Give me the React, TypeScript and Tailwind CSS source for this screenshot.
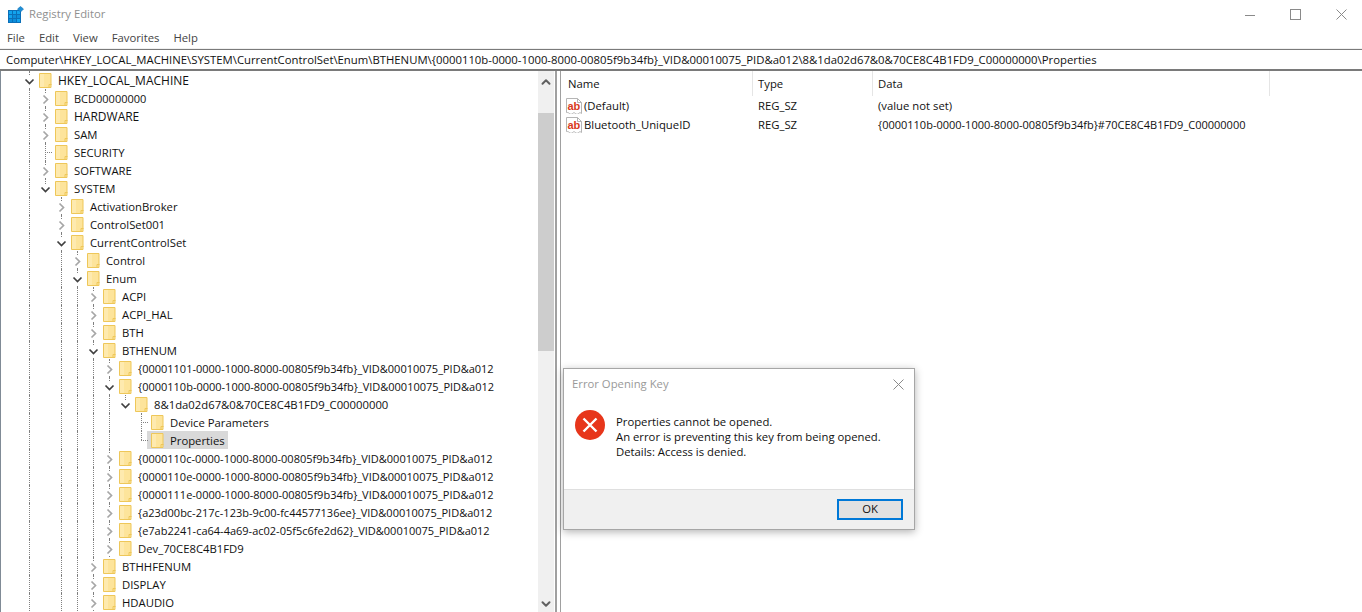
import { ChevronDown, ChevronUp } from 'lucide-react';

const font = { fontFamily: '"Open Sans", "Noto Sans", sans-serif' };

type Row = {
  level: number;
  kind: 'open' | 'closed' | 'leaf';
  label: string;
  guides: number[];
  last?: boolean;
  selected?: boolean;
  size?: string;
};

const l1 = [0];
const l3 = [0, 2];
const l4 = [0, 2, 3];
const l5 = [0, 2, 3, 4];
const l6 = [0, 2, 3, 4, 5];
const hex = 'text-[11px]';

const rows: Row[] = [
  { level: 0, kind: 'open', label: 'HKEY_LOCAL_MACHINE', guides: [], size: 'text-[12px]' },
  { level: 1, kind: 'closed', label: 'BCD00000000', guides: l1, size: hex },
  { level: 1, kind: 'closed', label: 'HARDWARE', guides: l1, size: 'text-[12px]' },
  { level: 1, kind: 'closed', label: 'SAM', guides: l1 },
  { level: 1, kind: 'leaf', label: 'SECURITY', guides: l1 },
  { level: 1, kind: 'closed', label: 'SOFTWARE', guides: l1 },
  { level: 1, kind: 'open', label: 'SYSTEM', guides: l1, last: true },
  { level: 2, kind: 'closed', label: 'ActivationBroker', guides: l1 },
  { level: 2, kind: 'closed', label: 'ControlSet001', guides: l1 },
  { level: 2, kind: 'open', label: 'CurrentControlSet', guides: l1 },
  { level: 3, kind: 'closed', label: 'Control', guides: l3 },
  { level: 3, kind: 'open', label: 'Enum', guides: l3 },
  { level: 4, kind: 'closed', label: 'ACPI', guides: l4 },
  { level: 4, kind: 'closed', label: 'ACPI_HAL', guides: l4 },
  { level: 4, kind: 'closed', label: 'BTH', guides: l4 },
  { level: 4, kind: 'open', label: 'BTHENUM', guides: l4 },
  { level: 5, kind: 'closed', label: '{00001101-0000-1000-8000-00805f9b34fb}_VID&00010075_PID&a012', guides: l5, size: hex },
  { level: 5, kind: 'open', label: '{0000110b-0000-1000-8000-00805f9b34fb}_VID&00010075_PID&a012', guides: l5, size: hex },
  { level: 6, kind: 'open', label: '8&1da02d67&0&70CE8C4B1FD9_C00000000', guides: l6, last: true },
  { level: 7, kind: 'leaf', label: 'Device Parameters', guides: l6 },
  { level: 7, kind: 'leaf', label: 'Properties', guides: l6, last: true, selected: true },
  { level: 5, kind: 'closed', label: '{0000110c-0000-1000-8000-00805f9b34fb}_VID&00010075_PID&a012', guides: l5, size: hex },
  { level: 5, kind: 'closed', label: '{0000110e-0000-1000-8000-00805f9b34fb}_VID&00010075_PID&a012', guides: l5, size: hex },
  { level: 5, kind: 'closed', label: '{0000111e-0000-1000-8000-00805f9b34fb}_VID&00010075_PID&a012', guides: l5, size: hex },
  { level: 5, kind: 'closed', label: '{a23d00bc-217c-123b-9c00-fc44577136ee}_VID&00010075_PID&a012', guides: l5, size: hex },
  { level: 5, kind: 'closed', label: '{e7ab2241-ca64-4a69-ac02-05f5c6fe2d62}_VID&00010075_PID&a012', guides: l5, size: hex },
  { level: 5, kind: 'closed', label: 'Dev_70CE8C4B1FD9', guides: l5 },
  { level: 4, kind: 'closed', label: 'BTHHFENUM', guides: l4 },
  { level: 4, kind: 'closed', label: 'DISPLAY', guides: l4 },
  { level: 4, kind: 'closed', label: 'HDAUDIO', guides: l4 },
];

function RegeditIcon() {
  return (
    <svg width="16" height="17" viewBox="0 0 16 17" className="shrink-0">
      <rect x="0" y="4" width="13" height="13" fill="#0b6fb8" />
      <path d="M1 5h3v3h-3zM5 5h3v3h-3zM9 5h3v3h-3zM1 9h3v3h-3zM9 13h3v3h-3z" fill="#12a3ee" />
      <path d="M5 9h3v3h-3zM9 9h3v3h-3zM1 13h3v3h-3zM5 13h3v3h-3z" fill="#0d8ddb" />
      <path d="M12.5 0.5l3 2.5-3 3-3-3z" fill="#1f8fd6" stroke="#0b6fb8" strokeWidth="0.6" />
    </svg>
  );
}

function Folder() {
  return (
    <svg width="13" height="15" viewBox="0 0 13 15" className="shrink-0 mt-px">
      <path d="M0.5 0.5h11.5v14h-11.5z" fill="#fde49b" stroke="#eec759" />
      <path d="M10 14.5v-3h2.5" fill="none" stroke="#eec759" />
      <path d="M1 1h4v13h-4z" fill="#fff0c4" opacity="0.5" />
    </svg>
  );
}

function RegSzIcon() {
  return (
    <svg width="16" height="16" viewBox="0 0 16 16" className="shrink-0">
      <path
        d="M0.5 14.5v-14h11l4 4v11c-1-1-2-1-3 0s-2 1-3 0-2-1-3 0-2 1-3 0-2-1-3-1z"
        fill="#fff"
        stroke="#b5b5b5"
      />
      <path d="M11.5 0.5v4h4" fill="none" stroke="#b5b5b5" />
      <text x="1.5" y="11.5" fontSize="11" fontWeight="700" fill="#d83b1d" style={{ fontFamily: '"Liberation Sans", sans-serif' }}>
        ab
      </text>
    </svg>
  );
}

function GuideCell() {
  return (
    <div className="w-4 shrink-0 h-full">
      <div className="ml-[9px] h-full border-l border-dotted border-[#808080]" />
    </div>
  );
}

function BranchCell({ row }: { row: Row }) {
  return (
    <div className="relative w-4 shrink-0 h-full">
      <div className={`ml-[9px] border-l border-dotted border-[#808080] ${row.last ? 'h-1/2' : 'h-full'}`} />
      {row.kind === 'leaf' && (
        <div className="absolute left-[9px] top-[9px] w-[7px] border-t border-dotted border-[#808080]" />
      )}
      {row.kind === 'open' && (
        <svg width="11" height="11" viewBox="0 0 11 11" className="absolute left-[4px] top-[5px] bg-white">
          <path d="M1.5 3.5l4 4 4-4" fill="none" stroke="#404040" strokeWidth="1.7" />
        </svg>
      )}
      {row.kind === 'closed' && (
        <svg width="11" height="11" viewBox="0 0 11 11" className="absolute left-[4px] top-[5px] bg-white">
          <path d="M3.5 1.5l4 4-4 4" fill="none" stroke="#a6a6a6" strokeWidth="1.7" />
        </svg>
      )}
    </div>
  );
}

function TreeRow({ row }: { row: Row }) {
  const cells = [];
  for (let i = 0; i < row.level; i++) {
    cells.push(row.guides.includes(i) ? <GuideCell key={i} /> : <div key={i} className="w-4 shrink-0" />);
  }
  return (
    <div className="flex items-center h-[18px] pl-[19px] whitespace-nowrap">
      {cells}
      <BranchCell row={row} />
      <div className={`flex items-center h-[18px] ${row.selected ? 'bg-[#d9d9d9] -ml-px pl-1 pr-[3px]' : 'pl-[3px] pr-[3px]'}`}>
        <Folder />
        <span className={`ml-[6px] pt-[2px] ${row.size ?? ''}`}>{row.label}</span>
      </div>
    </div>
  );
}

function Tree() {
  return (
    <div className="w-[538px] shrink-0 overflow-hidden border-l border-[#808b96]">
      {rows.map((row) => (
        <TreeRow key={row.label} row={row} />
      ))}
    </div>
  );
}

function Scrollbar() {
  return (
    <div className="w-4 shrink-0 bg-[#f0f0f0] flex flex-col items-center">
      <div className="h-[42px] w-full flex justify-center pt-[4px]">
        <ChevronUp size={14} strokeWidth={3.4} color="#606060" />
      </div>
      <div className="h-[238px] w-full bg-[#cdcdcd]" />
      <div className="flex-1" />
      <div className="h-[16px] flex items-center justify-center">
        <ChevronDown size={14} strokeWidth={3.4} color="#606060" />
      </div>
    </div>
  );
}

function ValueList() {
  return (
    <div className="flex-1 min-w-0">
      <div className="flex h-[25px] items-center">
        <div className="w-[192px] pl-[7px] pt-px h-full flex items-center border-r border-[#e5e5e5]">Name</div>
        <div className="w-[120px] pl-[5px] pt-px h-full flex items-center border-r border-[#e5e5e5]">Type</div>
        <div className="w-[397px] pl-[5px] pt-px h-full flex items-center border-r border-[#e5e5e5]">Data</div>
      </div>
      <div className="flex items-center h-[19px]">
        <div className="w-[192px] pl-[5px] flex items-center gap-[2px]">
          <RegSzIcon />
          <span className="pt-[2px]">(Default)</span>
        </div>
        <div className="w-[120px] pl-[5px] pt-[2px]">REG_SZ</div>
        <div className="pl-[5px] pt-[2px]">(value not set)</div>
      </div>
      <div className="flex items-center h-[19px]">
        <div className="w-[192px] pl-[5px] flex items-center gap-[2px]">
          <RegSzIcon />
          <span className="pt-[2px]">Bluetooth_UniqueID</span>
        </div>
        <div className="w-[120px] pl-[5px] pt-[2px]">REG_SZ</div>
        <div className="pl-[5px] pt-[2px] text-[11px]">{'{0000110b-0000-1000-8000-00805f9b34fb}#70CE8C4B1FD9_C00000000'}</div>
      </div>
    </div>
  );
}

function ErrorDialog() {
  return (
    <div className="absolute left-[563px] top-[368px] w-[352px] h-[162px] flex flex-col bg-white border border-[#a6a6a6] shadow-[0_2px_8px_rgba(0,0,0,0.3)]">
      <div className="flex items-center justify-between h-[30px] pl-2 pr-[10px]">
        <span className="text-[#999999]">Error Opening Key</span>
        <svg width="11" height="11" viewBox="0 0 11 11">
          <path d="M0.5 0.5l10 10M10.5 0.5l-10 10" stroke="#8a8a8a" />
        </svg>
      </div>
      <div className="flex-1 flex pl-[11px] pt-[10px]">
        <svg width="30" height="30" viewBox="0 0 30 30" className="shrink-0 mt-[1px]">
          <circle cx="15" cy="15" r="15" fill="#e7361b" />
          <path d="M8.5 8.5l13 13M21.5 8.5l-13 13" stroke="#fff" strokeWidth="2.4" />
        </svg>
        <div className="ml-[11px] leading-[15px] pt-[5px] text-[#101010]">
          <div>Properties cannot be opened.</div>
          <div>An error is preventing this key from being opened.</div>
          <div>Details: Access is denied.</div>
        </div>
      </div>
      <div className="h-[40px] bg-[#f0f0f0] border-t border-[#dfdfdf] flex justify-end pr-[11px] pt-[9px]">
        <button className="w-[66px] h-[21px] bg-[#e1e1e1] border-2 border-[#0078d7] flex items-center justify-center">
          OK
        </button>
      </div>
    </div>
  );
}

export default function App() {
  return (
    <div className="relative h-[612px] w-[1362px] overflow-hidden bg-white text-[11.3px] text-[#111]" style={font}>
      {/* Title bar */}
      <div className="flex items-center h-[29px] pl-2">
        <RegeditIcon />
        <span className="ml-[5px] text-[#8f8f8f]">Registry Editor</span>
        <div className="ml-auto flex items-center gap-[35px] pr-[15px]">
          <svg width="10" height="10" viewBox="0 0 10 10">
            <path d="M0 5.5h10" stroke="#8a8a8a" />
          </svg>
          <svg width="11" height="11" viewBox="0 0 11 11">
            <rect x="0.5" y="0.5" width="10" height="10" fill="none" stroke="#8a8a8a" />
          </svg>
          <svg width="11" height="11" viewBox="0 0 11 11">
            <path d="M0.5 0.5l10 10M10.5 0.5l-10 10" stroke="#8a8a8a" />
          </svg>
        </div>
      </div>

      {/* Menu */}
      <div className="flex items-center h-[20px] pl-[7px] gap-[14px] text-[#444] border-b border-[#f0f0f0]">
        <span>File</span>
        <span>Edit</span>
        <span>View</span>
        <span>Favorites</span>
        <span>Help</span>
      </div>

      {/* Address bar */}
      <div className="flex items-center h-[22px] pl-[6px] pt-[2px] border-t border-[#7a7a7a] border-b-2 whitespace-nowrap text-[11.33px]">
        {'Computer\\HKEY_LOCAL_MACHINE\\SYSTEM\\CurrentControlSet\\Enum\\BTHENUM\\{0000110b-0000-1000-8000-00805f9b34fb}_VID&00010075_PID&a012\\8&1da02d67&0&70CE8C4B1FD9_C00000000\\Properties'}
      </div>

      {/* Panes */}
      <div className="flex h-[541px]">
        <Tree />
        <Scrollbar />
        <div className="w-[2px] ml-px bg-[#a0a0a0] shrink-0" />
        <div className="w-[3px] shrink-0" />
        <div className="w-px bg-[#a0a0a0] shrink-0" />
        <ValueList />
      </div>

      <ErrorDialog />
    </div>
  );
}
